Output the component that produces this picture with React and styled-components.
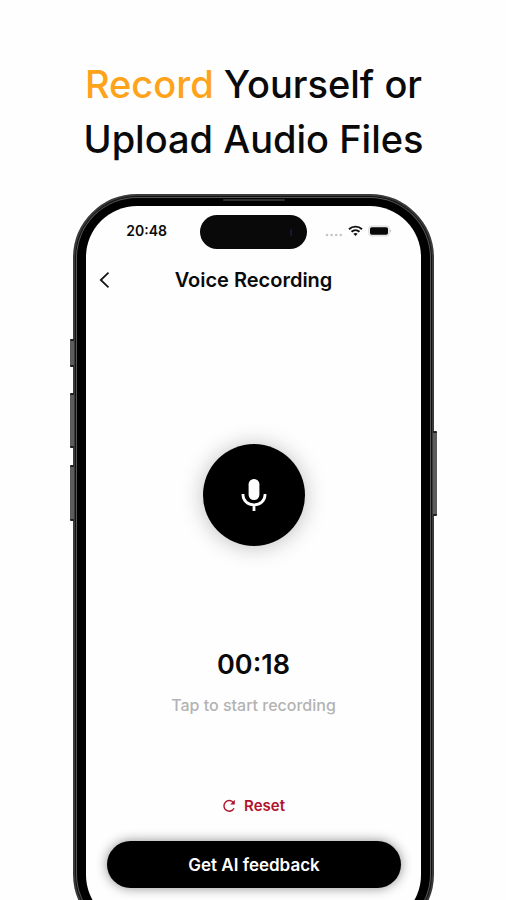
import React from "react";
import styled, { createGlobalStyle } from "styled-components";

const GlobalStyle = createGlobalStyle`
  * { box-sizing: border-box; }
  body { margin: 0; background: #fefefe; color: #0a0a0a; font-family: Inter, "Liberation Sans", sans-serif; }
  button { font: inherit; color: inherit; border: 0; background: none; padding: 0; cursor: pointer; }
`;

const Page = styled.main`
  height: 100vh;
  overflow: hidden;
  padding: 57px 72px 0 73px;
  display: flex;
  flex-direction: column;
  align-items: center;
  gap: 27px;
`;

const Headline = styled.h1`
  margin: 0;
  font-size: 38px;
  line-height: 55px;
  font-weight: 500;
  text-align: center;
  white-space: nowrap;
`;

const Accent = styled.span`
  color: #ffa31a;
`;

const Phone = styled.section`
  position: relative;
  flex: none;
  width: 100%;
  max-width: 420px;
  padding: 10px 11px;
  border-radius: 64px;
  background: #000;
  border: 2px solid #3a3a3a;
  box-shadow: inset 0 0 0 1px #111, inset 0 0 0 2px #555;
`;

const SideKey = styled.span`
  position: absolute;
  ${(p) => p.$side}: -5px;
  top: ${(p) => p.$top}px;
  width: 4px;
  height: ${(p) => p.$length}px;
  border-radius: 1px;
  background: #5c5c5c;
  border-top: 2px solid #222;
  border-bottom: 2px solid #222;
`;

const Speaker = styled.span`
  position: absolute;
  top: 3px;
  left: 50%;
  width: 62px;
  height: 2px;
  margin-left: -31px;
  border-radius: 1px;
  background: #303030;
`;

const Screen = styled.div`
  border-radius: 51px;
  background: #fefefe;
  padding: 9px 12px 38px;
  display: flex;
  flex-direction: column;
  align-items: center;
`;

const StatusBar = styled.div`
  width: 100%;
  display: grid;
  grid-template-columns: 1fr 107px 1fr;
  align-items: center;
`;

const Clock = styled.time`
  padding: 0 33px 2px 0;
  text-align: right;
  font-size: 14px;
  line-height: 18px;
  font-weight: 600;
`;

const Island = styled.div`
  height: 34px;
  border-radius: 17px;
  background: #090909;
  display: flex;
  align-items: center;
  justify-content: flex-end;
  padding-right: 15px;
`;

const Lens = styled.span`
  width: 2px;
  height: 7px;
  border-radius: 1px;
  background: #171735;
`;

const Indicators = styled.div`
  display: flex;
  align-items: center;
  gap: 5px;
  padding: 0 0 3px 18px;
`;

const TitleBar = styled.header`
  width: 100%;
  height: 62px;
  display: grid;
  grid-template-columns: 24px 1fr 24px;
  align-items: center;
`;

const BackButton = styled.button`
  width: 24px;
  height: 24px;
  display: flex;
  align-items: center;
`;

const Title = styled.h2`
  margin: 0;
  text-align: center;
  font-size: 20px;
  line-height: 28px;
  font-weight: 600;
`;

const RecordButton = styled.button`
  width: 102px;
  height: 102px;
  margin-top: 133px;
  border-radius: 50%;
  background: #000;
  box-shadow: 0 1px 22px rgba(0, 0, 0, 0.26);
  display: flex;
  align-items: center;
  justify-content: center;
`;

const Timer = styled.time`
  margin-top: 101px;
  font-size: 27px;
  line-height: 36px;
  font-weight: 600;
`;

const Hint = styled.p`
  margin: 12px 0 0;
  color: #b3b3b3;
  font-size: 16px;
  line-height: 20px;
  font-weight: 500;
`;

const ResetButton = styled.button`
  margin-top: 80px;
  display: flex;
  align-items: center;
  gap: 8px;
  color: #b0142c;
  font-size: 15px;
  line-height: 22px;
  font-weight: 600;
`;

const FeedbackButton = styled.button`
  align-self: stretch;
  margin: 24px 8px 0 9px;
  height: 47px;
  border-radius: 24px;
  background: #000;
  color: #fff;
  font-size: 17px;
  font-weight: 600;
  box-shadow: 0 0 12px rgba(0, 0, 0, 0.45);
`;

const SignalIcon = () => (
  <svg width="18" height="12" viewBox="0 0 18 12" fill="#c6c6c6" aria-hidden="true">
    <circle cx="2" cy="10" r="1.3" />
    <circle cx="6.6" cy="10" r="1.3" />
    <circle cx="11.2" cy="10" r="1.3" />
    <circle cx="15.8" cy="10" r="1.3" />
  </svg>
);

const WifiIcon = () => (
  <svg width="15" height="12" viewBox="0 0 15 12" fill="none" stroke="#111" strokeWidth="1.9" aria-hidden="true">
    <path d="M1 4.2C4.6 .7 10.4 .7 14 4.2" />
    <path d="M3.5 6.8c2.3-2.2 5.7-2.2 8 0" />
    <path d="M7.5 10.9 5.4 8.8c1.2-1 3-1 4.2 0z" fill="#111" stroke="none" />
  </svg>
);

const BatteryIcon = () => (
  <svg width="24" height="12" viewBox="0 0 24 12" aria-hidden="true">
    <rect x=".7" y="1" width="20.6" height="10" rx="3" fill="#eee" stroke="#ddd" />
    <rect x="2" y="2.3" width="18" height="7.4" rx="1.8" fill="#080808" />
    <path d="M22.4 4.5c1 .4 1 2.6 0 3z" fill="#aaa" />
  </svg>
);

const BackIcon = () => (
  <svg width="12" height="18" viewBox="0 0 12 18" fill="none" stroke="#161616" strokeWidth="1.8" aria-hidden="true">
    <path d="M10.5 1.7 2.8 9l7.7 7.3" />
  </svg>
);

const MicIcon = () => (
  <svg width="26" height="34" viewBox="0 0 26 34" aria-hidden="true">
    <rect x="7.6" y="1" width="10.8" height="21" rx="5.2" fill="#fff" />
    <path d="M2 16v1c0 5.5 4.700 9.800 11 9.800S24 22.500 24 17v-1M13 26v7" fill="none" stroke="#fff" strokeWidth="2.8" />
  </svg>
);

const ResetIcon = () => (
  <svg width="14" height="14" viewBox="0 0 14 14" fill="none" stroke="currentColor" strokeWidth="1.4" aria-hidden="true">
    <path d="M11.500 3.700A5.300 5.300 0 1 0 12 9.200" />
    <path d="M12.800 .8v4.600H8.200z" fill="currentColor" stroke="none" />
  </svg>
);

export default function App() {
  return (
    <>
      <GlobalStyle />
      <Page>
        <Headline>
          <Accent>Record</Accent> Yourself or
          <br />
          Upload Audio Files
        </Headline>
        <Phone aria-label="Voice recorder">
          <SideKey $side="left" $top={143} $length={28} />
          <SideKey $side="left" $top={197} $length={55} />
          <SideKey $side="left" $top={269} $length={56} />
          <SideKey $side="right" $top={235} $length={85} />
          <Speaker />
          <Screen>
            <StatusBar>
              <Clock>20:48</Clock>
              <Island>
                <Lens />
              </Island>
              <Indicators>
                <SignalIcon />
                <WifiIcon />
                <BatteryIcon />
              </Indicators>
            </StatusBar>
            <TitleBar>
              <BackButton aria-label="Back">
                <BackIcon />
              </BackButton>
              <Title>Voice Recording</Title>
            </TitleBar>
            <RecordButton aria-label="Start recording">
              <MicIcon />
            </RecordButton>
            <Timer>00:18</Timer>
            <Hint>Tap to start recording</Hint>
            <ResetButton>
              <ResetIcon />
              Reset
            </ResetButton>
            <FeedbackButton>Get AI feedback</FeedbackButton>
          </Screen>
        </Phone>
      </Page>
    </>
  );
}
